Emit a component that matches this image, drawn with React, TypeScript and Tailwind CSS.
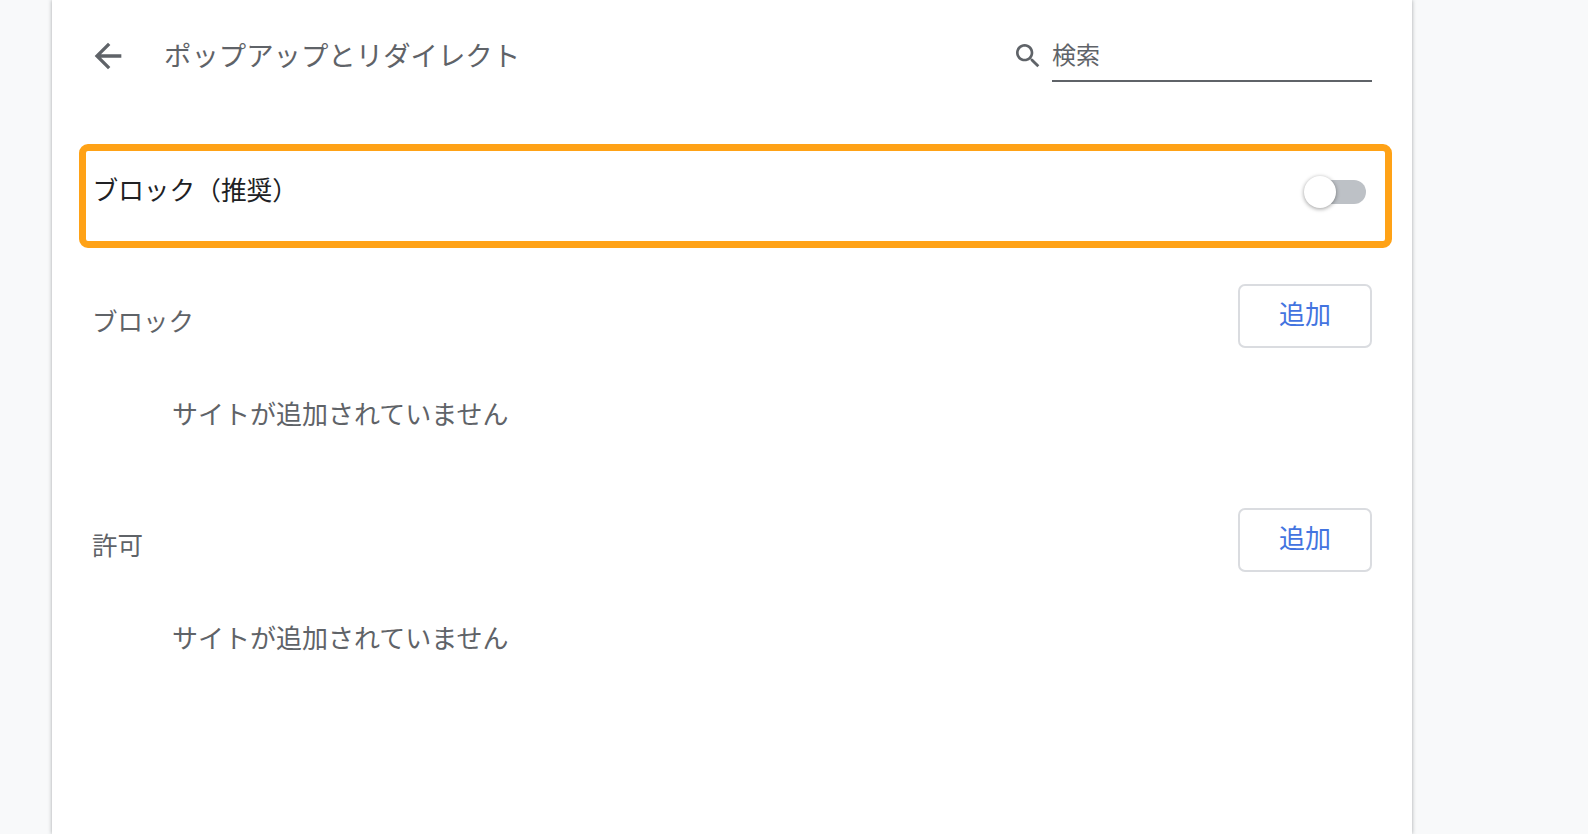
const font = { fontFamily: '"Noto Sans CJK JP", "Noto Sans", sans-serif' };

function SiteSection({ title }: { title: string }) {
  return (
    <section>
      <div className="flex items-start justify-between pl-10 pr-10">
        <h2 className="pt-[18px] text-[25.5px] leading-[36px] text-[#5f6368]">{title}</h2>
        <button className="h-16 w-[134px] rounded-[7px] border-2 border-[#dadce0] pb-2 text-[26px] text-[#4374e0]">追加</button>
      </div>
      <p className="mt-[45px] pl-[120px] text-[26px] leading-[40px] text-[#5f6368]">サイトが追加されていません</p>
    </section>
  );
}

export default function App() {
  return (
    <div className="flex h-[834px] justify-center overflow-hidden bg-[#f8f9fa] pl-[52px] pr-[176px]" style={font}>
      <main className="h-full w-[1360px] bg-white shadow-[0_0_4px_rgba(60,64,67,0.45)]">
        <header className="flex h-[144px] items-start pl-9 pr-10 pt-9">
          <svg className="h-10 w-10 fill-[#5f6368]" viewBox="0 0 24 24">
            <path d="M20 11H7.83l5.59-5.59L12 4l-8 8 8 8 1.41-1.41L7.83 13H20v-2z" />
          </svg>
          <h1 className="ml-9 flex-1 pb-1 text-[27.4px] leading-[36px] text-[#5f6368]">ポップアップとリダイレクト</h1>
          <svg className="mt-1 h-8 w-8 fill-[#5f6368]" viewBox="0 0 24 24">
            <path d="M15.5 14h-.79l-.28-.27C15.41 12.59 16 11.11 16 9.5 16 5.91 13.09 3 9.5 3S3 5.91 3 9.5 5.91 16 9.5 16c1.61 0 3.09-.59 4.23-1.57l.27.28v.79l5 4.99L20.49 19l-4.99-5zm-6 0C7.01 14 5 11.99 5 9.5S7.01 5 9.5 5 14 7.01 14 9.5 11.99 14 9.5 14z" />
          </svg>
          <div className="ml-2 h-[46px] w-[320px] border-b-2 border-[#5f6368] text-[24px] leading-[36px] text-[#5f6368]">検索</div>
        </header>

        <div className="ml-[26.5px] flex h-[104px] w-[1313px] items-center justify-between rounded-[9px] border-[7.5px] border-[#ffa216] pb-2 pl-[7px] pr-[18.5px]">
          <span className="mb-[6px] text-[25.7px] leading-[36px] text-[#202124]">ブロック（推奨）</span>
          <div className="relative h-6 w-14 rounded-full bg-[#bdc1c6]">
            <div className="absolute left-[-6px] top-[-4px] h-8 w-8 rounded-full bg-white shadow-[0_1px_4px_rgba(0,0,0,0.4)]" />
          </div>
        </div>

        <div className="mt-9 flex flex-col gap-[75px]">
          <SiteSection title="ブロック" />
          <SiteSection title="許可" />
        </div>
      </main>
    </div>
  );
}
